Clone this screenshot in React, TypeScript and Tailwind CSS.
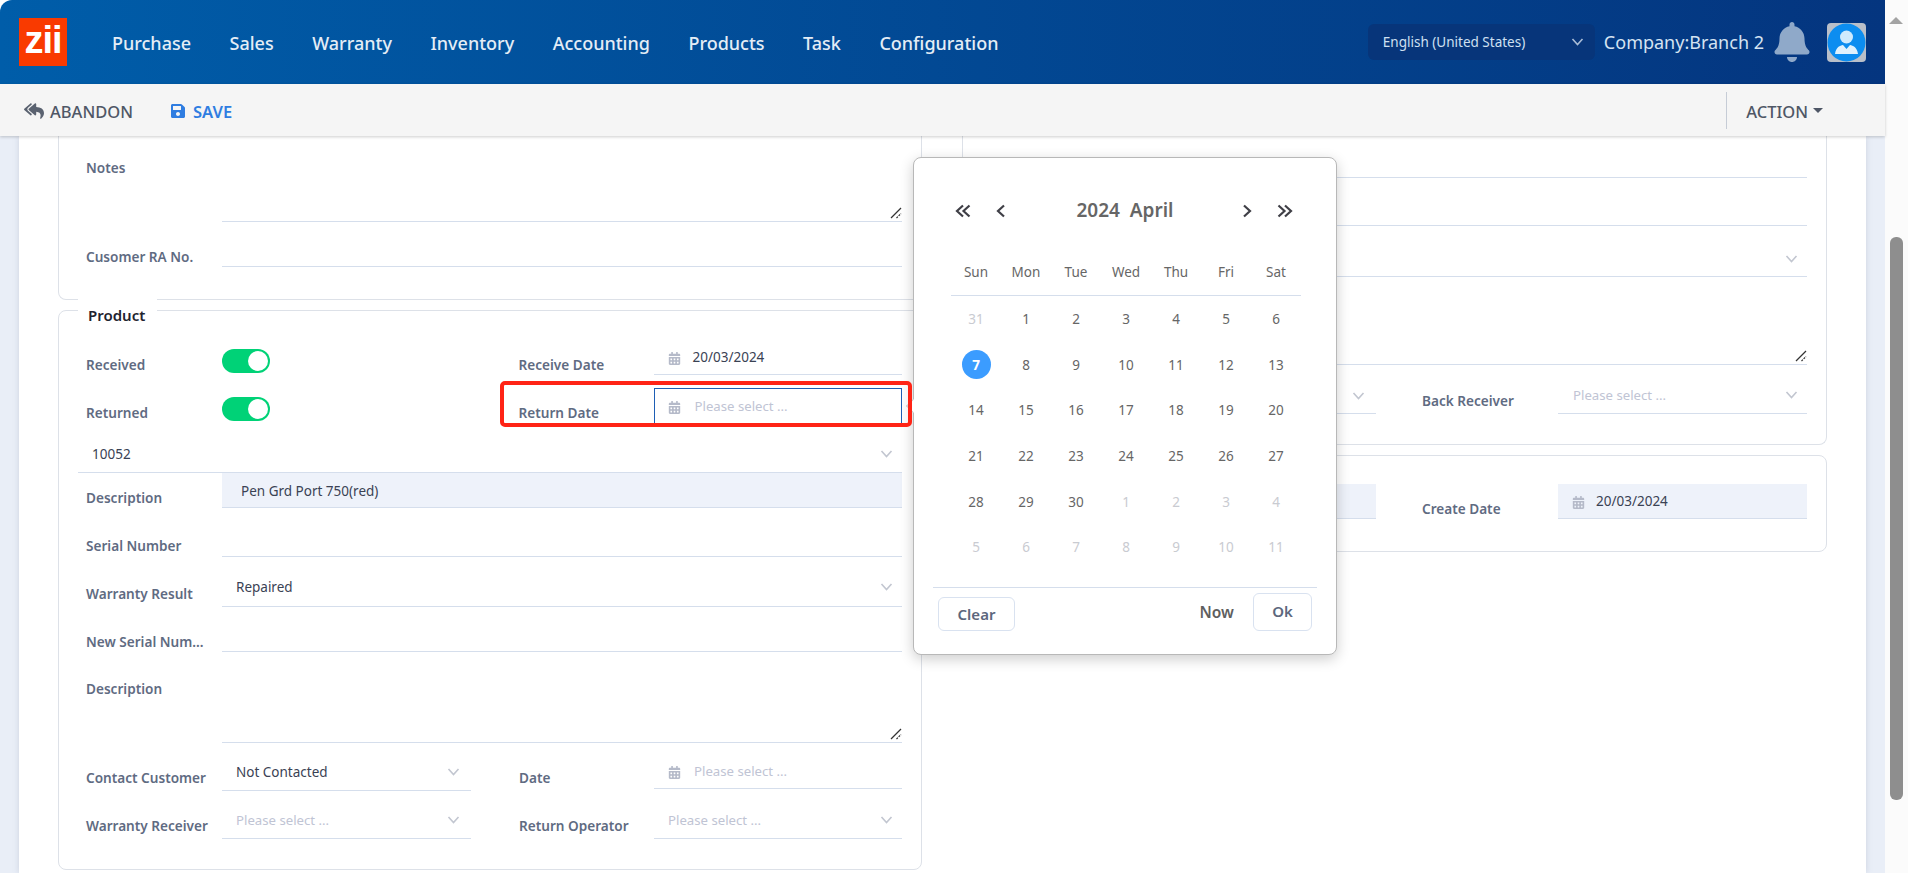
import React from "react";
import { FaCalendarAlt, FaSave, FaReplyAll, FaBell } from "react-icons/fa";

const Chevron = ({ className = "" }: { className?: string }) => (
  <svg width="13" height="8" viewBox="0 0 13 8" className={className} fill="none" stroke="currentColor" strokeWidth="1.6">
    <path d="M1.5 1 L6.5 6.5 L11.5 1" />
  </svg>
);

const Arrow = ({ dir, double }: { dir: "l" | "r"; double?: boolean }) => (
  <svg width={double ? 16 : 10} height="14" viewBox={double ? "0 0 16 14" : "0 0 10 14"} fill="none" stroke="#3f3f46" strokeWidth="2.2" className={dir === "r" ? "rotate-180" : ""}>
    {double ? (
      <>
        <path d="M8 1.5 L2 7 L8 12.5" />
        <path d="M14.5 1.5 L8.5 7 L14.5 12.5" />
      </>
    ) : (
      <path d="M8 1.5 L2 7 L8 12.5" />
    )}
  </svg>
);

const Resize = () => (
  <svg width="12" height="12" viewBox="0 0 12 12" className="absolute right-0 bottom-[2px]" fill="none" stroke="#333" strokeWidth="1.2">
    <path d="M1 11 L11 1" />
    <path d="M6.5 11 L11 6.5" strokeDasharray="2 1" />
  </svg>
);

const Label = ({ children, className = "" }: { children: React.ReactNode; className?: string }) => (
  <div className={`h-5 leading-5 text-[13.6px] font-semibold text-[#5f6b82] whitespace-nowrap ${className}`}>{children}</div>
);

const Toggle = () => (
  <div className="w-12 h-6 rounded-full bg-[#00d277] flex items-center justify-end pr-[2px]">
    <div className="w-5 h-5 rounded-full bg-white" />
  </div>
);

const Placeholder = ({ children = "Please select ..." }: { children?: React.ReactNode }) => (
  <span className="text-[13.2px] leading-5 text-[#c0c4d4]">{children}</span>
);

const Value = ({ children }: { children: React.ReactNode }) => (
  <span className="text-[13.5px] leading-5 text-[#3a4254]">{children}</span>
);

const Cal = () => <FaCalendarAlt className="text-[#b5bac9] text-[13px] mt-[5px] shrink-0" />;

const NAV = ["Purchase", "Sales", "Warranty", "Inventory", "Accounting", "Products", "Task", "Configuration"];
const DAYS = ["Sun", "Mon", "Tue", "Wed", "Thu", "Fri", "Sat"];
const CELLS: [number, boolean][] = [
  [31, true], [1, false], [2, false], [3, false], [4, false], [5, false], [6, false],
  [7, false], [8, false], [9, false], [10, false], [11, false], [12, false], [13, false],
  [14, false], [15, false], [16, false], [17, false], [18, false], [19, false], [20, false],
  [21, false], [22, false], [23, false], [24, false], [25, false], [26, false], [27, false],
  [28, false], [29, false], [30, false], [1, true], [2, true], [3, true], [4, true],
  [5, true], [6, true], [7, true], [8, true], [9, true], [10, true], [11, true],
];

function LeftHalfSelect({ label, children }: { label: string; children: React.ReactNode }) {
  return (
    <div className="w-[385px] flex h-[35px]">
      <Label className="w-[136px] mt-[12px]">{label}</Label>
      <div className="w-[249px] h-[35px] border-b border-[#d5deec] flex items-start justify-between pl-[14px] pr-[11px] pt-[6px]">
        {children}
        <Chevron className="text-[#c2c6d0] mt-[6px]" />
      </div>
    </div>
  );
}

export default function App() {
  return (
    <div className="w-[1908px] h-[873px] flex overflow-hidden relative bg-white font-['Noto_Sans',sans-serif]">
      <div className="w-[1885px] flex flex-col h-full">
        {/* Header */}
        <header className="h-[84px] shrink-0 rounded-tl-xl bg-gradient-to-r from-[#005da9] to-[#04357f] flex items-center">
          <div className="ml-[19px] w-[48px] h-[48px] bg-[#f93a00] flex items-center justify-center text-white font-bold text-[38px] leading-none tracking-[-1px] font-['Liberation_Sans',sans-serif] pb-[4px]">
            zii
          </div>
          <nav className="ml-[45px] flex gap-[38.5px] text-[18px] font-medium text-[#e4edf6] pt-[2px]">
            {NAV.map((n) => (
              <span key={n}>{n}</span>
            ))}
          </nav>
          <div className="ml-auto w-[227px] h-[36px] rounded-md bg-[#07357a] flex items-center justify-between pl-[15px] pr-[11px] text-[13.5px] text-[#cfe0f2]">
            <span>English (United States)</span>
            <Chevron className="text-[#a9bcd6]" />
          </div>
          <span className="ml-[9px] text-[18px] text-[#d5e3f2] whitespace-nowrap">Company:Branch 2</span>
          <FaBell className="ml-[8px] text-[#8fa9c9] text-[40px]" />
          <div className="ml-[15px] mr-[19px] w-[39px] h-[39px] rounded-[4px] bg-[#b9bfc9] flex items-center justify-center">
            <svg width="39" height="39" viewBox="0 0 39 39">
              <circle cx="19.5" cy="19.5" r="19" fill="#0c8df0" />
              <circle cx="19.5" cy="14" r="6.5" fill="#cfeafd" />
              <path d="M8 31 C9 24 13 22.5 16 22 L19.5 26 L23 22 C26 22.5 30 24 31 31 Z" fill="#dff1fd" />
            </svg>
          </div>
        </header>

        {/* Toolbar */}
        <div className="h-[52px] shrink-0 bg-[#f5f5f5] shadow-[0_1px_3px_rgba(0,0,0,0.2)] z-10 flex items-center text-[16.5px] font-medium pt-[5px]">
          <FaReplyAll className="ml-[24px] text-[#5a6270] text-[20px] -mt-[4px]" />
          <span className="ml-[6px] text-[#4f5766]">ABANDON</span>
          <FaSave className="ml-[37px] text-[#2f7de1] text-[16px] -mt-[3px]" />
          <span className="ml-[7px] text-[#2f7de1] font-semibold">SAVE</span>
          <div className="ml-auto w-px h-[37px] bg-[#c6ccd6] -mt-[5px]" />
          <span className="ml-[19px] text-[#4f5766]">ACTION</span>
          <div className="ml-[5px] mr-[62px] w-0 h-0 border-x-[5px] border-x-transparent border-t-[5px] border-t-[#4f5766] mb-[5px]" />
        </div>

        {/* Main */}
        <main className="flex-1 min-h-0 bg-[#e9eef7] pl-[19px] pr-[19px] flex">
          <div className="w-[1847px] bg-white pl-[39px] flex gap-[40px] shadow-[0_0_6px_rgba(120,130,160,0.25)]">
            {/* Left column */}
            <div className="w-[864px] flex flex-col gap-[10px]">
              <section className="h-[164px] shrink-0 border border-t-0 border-[#dde1e8] rounded-b-lg pl-[27px] pr-[19px] flex flex-col">
                <div className="flex h-[86px] shrink-0">
                  <Label className="w-[136px] mt-[22px]">Notes</Label>
                  <div className="flex-1 border-b border-[#d5deec] relative">
                    <Resize />
                  </div>
                </div>
                <div className="flex h-[45px] shrink-0">
                  <Label className="w-[136px] mt-[25px]">Cusomer RA No.</Label>
                  <div className="flex-1 border-b border-[#d5deec]" />
                </div>
              </section>

              <section className="h-[560px] shrink-0 relative border border-[#dde1e8] rounded-lg pl-[27px] pr-[19px] pt-[29px] flex flex-col">
                <div className="absolute left-[19px] -top-[12px] w-[79px] h-[30px] bg-white pl-[10px] text-[15px] font-semibold leading-[32px] text-[#1f2430]">
                  Product
                </div>

                <div className="flex gap-[47px] h-[36px] shrink-0">
                  <div className="w-[385px] flex">
                    <Label className="w-[136px] mt-[15px]">Received</Label>
                    <div className="mt-[9px]"><Toggle /></div>
                  </div>
                  <div className="flex w-[385px]">
                    <Label className="w-[136px] mt-[15px] pl-[1px]">Receive Date</Label>
                    <div className="flex-1 h-[35px] border-b border-[#d5deec] flex items-start gap-[12px] pl-[14px] pt-[7px]">
                      <Cal /><Value>20/03/2024</Value>
                    </div>
                  </div>
                </div>

                <div className="flex gap-[47px] h-[36px] shrink-0 mt-[12px]">
                  <div className="w-[385px] flex">
                    <Label className="w-[136px] mt-[15px]">Returned</Label>
                    <div className="mt-[9px]"><Toggle /></div>
                  </div>
                  <div className="flex w-[385px]">
                    <Label className="w-[136px] mt-[15px] pl-[1px]">Return Date</Label>
                    <div className="flex-1 h-[36px] border border-[#1e5fb5] flex items-start gap-[14px] pl-[13px] pt-[7px]">
                      <Cal /><Placeholder />
                    </div>
                  </div>
                </div>

                <div className="-ml-[8px] h-[36px] mt-[13px] shrink-0 border-b border-[#d5deec] flex items-center justify-between pl-[14px] pr-[9px] pb-[2px]">
                  <Value>10052</Value>
                  <Chevron className="text-[#c2c6d0]" />
                </div>

                <div className="flex h-[35px] shrink-0">
                  <Label className="w-[136px] mt-[15px]">Description</Label>
                  <div className="flex-1 bg-[#eef2fa] border-b border-[#d5deec] pl-[19px] pt-[5px]">
                    <Value>Pen Grd Port 750(red)</Value>
                  </div>
                </div>

                <div className="flex h-[36px] mt-[13px] shrink-0">
                  <Label className="w-[136px] mt-[15px]">Serial Number</Label>
                  <div className="flex-1 border-b border-[#d5deec]" />
                </div>

                <div className="flex h-[37px] mt-[13px] shrink-0">
                  <Label className="w-[136px] mt-[14px]">Warranty Result</Label>
                  <div className="flex-1 border-b border-[#d5deec] flex items-start justify-between pl-[14px] pr-[9px] pt-[7px]">
                    <Value>Repaired</Value>
                    <Chevron className="text-[#c2c6d0] mt-[6px]" />
                  </div>
                </div>

                <div className="flex h-[35px] mt-[10px] shrink-0">
                  <Label className="w-[136px] mt-[15px]">New Serial Num...</Label>
                  <div className="flex-1 border-b border-[#d5deec]" />
                </div>

                <div className="flex h-[74px] mt-[17px] shrink-0">
                  <Label className="w-[136px] mt-[10px]">Description</Label>
                  <div className="flex-1 border-b border-[#d5deec] relative">
                    <Resize />
                  </div>
                </div>

                <div className="flex gap-[47px] mt-[13px] shrink-0">
                  <LeftHalfSelect label="Contact Customer"><Value>Not Contacted</Value></LeftHalfSelect>
                  <div className="flex w-[385px]">
                    <Label className="w-[136px] mt-[12px] pl-[1px]">Date</Label>
                    <div className="flex-1 h-[33px] border-b border-[#d5deec] flex items-start gap-[13px] pl-[14px] pt-[5px]">
                      <Cal /><Placeholder />
                    </div>
                  </div>
                </div>

                <div className="flex gap-[47px] mt-[13px] shrink-0">
                  <LeftHalfSelect label="Warranty Receiver"><Placeholder /></LeftHalfSelect>
                  <div className="flex w-[385px]">
                    <Label className="w-[136px] mt-[12px] pl-[1px]">Return Operator</Label>
                    <div className="flex-1 h-[35px] border-b border-[#d5deec] flex items-start justify-between pl-[14px] pr-[9px] pt-[6px]">
                      <Placeholder />
                      <Chevron className="text-[#c2c6d0] mt-[6px]" />
                    </div>
                  </div>
                </div>
              </section>
            </div>

            {/* Right column */}
            <div className="w-[865px] flex flex-col gap-[10px]">
              <section className="h-[309px] shrink-0 border border-t-0 border-[#dde1e8] rounded-b-lg pl-[22px] pr-[19px] flex flex-col">
                <div className="h-[42px] shrink-0 ml-[140px] border-b border-[#d5deec]" />
                <div className="h-[48px] shrink-0 ml-[140px] border-b border-[#d5deec]" />
                <div className="h-[51px] shrink-0 ml-[140px] border-b border-[#d5deec] flex items-start justify-end pr-[9px] pt-[29px]">
                  <Chevron className="text-[#c2c6d0]" />
                </div>
                <div className="h-[88px] shrink-0 ml-[140px] border-b border-[#d5deec] relative">
                  <Resize />
                </div>
                <div className="flex h-[36px] mt-[13px] shrink-0">
                  <div className="w-[391px] flex">
                    <div className="w-[140px]" />
                    <div className="flex-1 border-b border-[#d5deec] flex items-start justify-end pr-[11px] pt-[14px]">
                      <Chevron className="text-[#c2c6d0]" />
                    </div>
                  </div>
                  <Label className="ml-[46px] w-[136px] mt-[13px]">Back Receiver</Label>
                  <div className="flex-1 border-b border-[#d5deec] flex items-start justify-between pl-[15px] pr-[9px] pt-[7px]">
                    <Placeholder />
                    <Chevron className="text-[#c2c6d0] mt-[6px]" />
                  </div>
                </div>
              </section>

              <section className="h-[97px] shrink-0 border border-[#dde1e8] rounded-lg pl-[22px] pr-[19px] pt-[28px]">
                <div className="flex h-[35px]">
                  <div className="w-[391px] flex">
                    <div className="w-[140px]" />
                    <div className="flex-1 bg-[#eef2fa] border-b border-[#d5deec]" />
                  </div>
                  <Label className="ml-[46px] w-[136px] mt-[15px]">Create Date</Label>
                  <div className="flex-1 bg-[#eef2fa] border-b border-[#d5deec] flex items-start gap-[11px] pl-[14px] pt-[7px]">
                    <Cal /><Value>20/03/2024</Value>
                  </div>
                </div>
              </section>
            </div>
          </div>
        </main>
      </div>

      {/* Scrollbar */}
      <aside className="flex-1 bg-[#fbfbfb] relative">
        <div className="absolute left-[4px] top-[17px] w-0 h-0 border-x-[7px] border-x-transparent border-b-[7px] border-b-[#a3a3a3]" />
        <div className="absolute left-[5px] w-[13px] top-[237px] h-[563px] rounded-md bg-[#8e8e8e]" />
      </aside>

      {/* Date popup */}
      <div className="absolute left-[913px] top-[157px] w-[424px] h-[498px] bg-white border border-[#b8b8b8] rounded-lg shadow-[0_4px_14px_rgba(0,0,0,0.2)] flex flex-col">
        <div className="absolute -left-[6px] top-[243px] w-[10px] h-[10px] rotate-45 bg-white border-l border-b border-[#c9c9c9]" />
        <div className="h-[105px] shrink-0 flex items-center pl-[41px]">
          <Arrow dir="l" double />
          <div className="ml-[25px]"><Arrow dir="l" /></div>
          <span className="ml-[61px] w-[116px] text-[19px] font-semibold text-[#666] whitespace-pre text-center">2024  April</span>
          <div className="ml-[59px]"><Arrow dir="r" /></div>
          <div className="ml-[25px]"><Arrow dir="r" double /></div>
        </div>
        <div className="w-[350px] ml-[37px] h-[33px] shrink-0 grid grid-cols-7 border-b border-[#d5deec] text-[13.5px] text-[#666] text-center">
          {DAYS.map((d) => (
            <div key={d} className="leading-[18px]">{d}</div>
          ))}
        </div>
        <div className="w-[350px] ml-[37px] mt-[0.5px] shrink-0 grid grid-cols-7 auto-rows-[45.6px] text-[13.5px] text-[#666]">
          {CELLS.map(([n, muted], i) => (
            <div key={i} className={`flex items-center justify-center ${muted ? "text-[#c9cbd1]" : ""}`}>
              {n === 7 && !muted ? (
                <span className="w-[29px] h-[29px] rounded-full bg-[#3b9cff] text-white font-bold flex items-center justify-center">7</span>
              ) : (
                n
              )}
            </div>
          ))}
        </div>
        <div className="mx-[19px] mt-[16.5px] border-t border-[#d5deec] relative flex items-start pt-[5px] px-[5px] text-[15px] font-semibold">
          <div className="mt-[4px] w-[77px] h-[34px] border border-[#d9e2f0] rounded-md flex items-center justify-center text-[#5c677d] pt-[1px]">Clear</div>
          <span className="ml-auto mt-[9px] text-[15.5px] text-[#5f5f5f] leading-5">Now</span>
          <div className="ml-[19px] w-[59px] h-[38px] border border-[#d9e2f0] rounded-md flex items-center justify-center text-[#5c677d]">Ok</div>
        </div>
      </div>

      {/* Red annotation */}
      <div className="absolute left-[500px] top-[381px] w-[412px] h-[46px] border-[4px] border-[#ff2416] rounded-[5px] pointer-events-none" />
    </div>
  );
}
